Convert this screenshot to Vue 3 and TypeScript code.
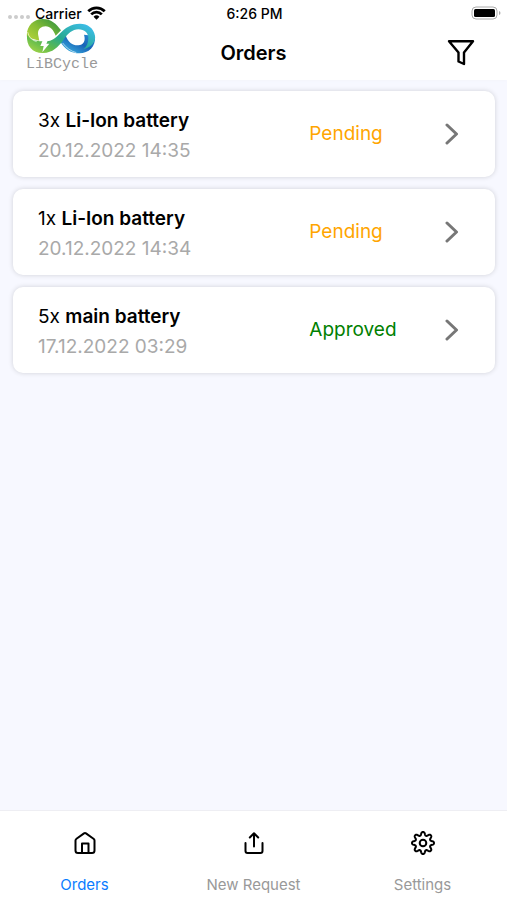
<script setup lang="ts">
import { ref } from 'vue'

type Status = 'Pending' | 'Approved'

interface Order {
  id: number
  quantity: number
  product: string
  placed: string
  status: Status
}

const orders: Order[] = [
  { id: 3, quantity: 3, product: 'Li-Ion battery', placed: '20.12.2022 14:35', status: 'Pending' },
  { id: 2, quantity: 1, product: 'Li-Ion battery', placed: '20.12.2022 14:34', status: 'Pending' },
  { id: 1, quantity: 5, product: 'main battery', placed: '17.12.2022 03:29', status: 'Approved' },
]

const tabs = [
  { id: 'orders', label: 'Orders' },
  { id: 'request', label: 'New Request' },
  { id: 'settings', label: 'Settings' },
]
const active = ref('orders')

// Outline of an eight-toothed gear, sampled around its centre.
function gearPath(centre: number, radius: number, depth: number): string {
  const points: string[] = []
  for (let i = 0; i < 160; i++) {
    const a = (i / 160) * Math.PI * 2
    const wave = Math.tanh(1.2 * Math.cos(8 * a)) / Math.tanh(1.2)
    const r = radius + depth * wave
    points.push(`${(centre + r * Math.sin(a)).toFixed(2)} ${(centre - r * Math.cos(a)).toFixed(2)}`)
  }
  return `M${points.join('L')}Z`
}
const gear = gearPath(13, 9.4, 1.6)
</script>

<template>
  <div class="screen">
    <header class="header">
      <div class="status-bar">
        <div class="carrier">
          <span class="signal"><i></i><i></i><i></i><i></i></span>
          <span>Carrier</span>
          <svg class="wifi" viewBox="0 0 18 13" aria-hidden="true">
            <path d="M1.2 4.8a11 11 0 0 1 15.6 0" />
            <path d="M4 7.8a7 7 0 0 1 10 0" />
            <path class="solid" d="M9 12.8 6.2 10a4 4 0 0 1 5.6 0Z" />
          </svg>
        </div>
        <span class="time">6:26 PM</span>
        <svg class="battery" viewBox="0 0 30 14" aria-hidden="true">
          <rect class="shell" x="1" y="1" width="25" height="12" rx="4" />
          <rect x="3" y="3" width="21" height="8" rx="1.5" />
          <path class="cap" d="M28 5v4q1.5-.6 1.5-2T28 5Z" />
        </svg>
      </div>

      <div class="title-bar">
        <h1>Orders</h1>
        <button class="filter" type="button" aria-label="Filter orders">
          <svg viewBox="0 0 28 28" aria-hidden="true">
            <path d="M2 2.2H26L17 13.5V25L11.5 22.5V13.5Z" />
          </svg>
        </button>
      </div>

      <div class="logo">
        <svg viewBox="78 54 210 108" aria-hidden="true">
          <defs>
            <linearGradient id="leaf" x1="0" y1="1" x2="1" y2="0.2">
              <stop offset="0" stop-color="#b9d63a" />
              <stop offset=".5" stop-color="#86bd35" />
              <stop offset="1" stop-color="#35953f" />
            </linearGradient>
            <linearGradient id="ribbon" x1="0" y1="1" x2="1" y2=".2">
              <stop offset="0" stop-color="#b5da45" />
              <stop offset=".3" stop-color="#5dba4d" />
              <stop offset=".55" stop-color="#27a98e" />
              <stop offset="1" stop-color="#3bbce6" />
            </linearGradient>
            <linearGradient id="water" x1="1" y1="0" x2="0" y2="1">
              <stop offset="0" stop-color="#2a8fd4" />
              <stop offset=".45" stop-color="#1863b8" />
              <stop offset="1" stop-color="#45c4ea" />
            </linearGradient>
          </defs>
          <path fill="url(#leaf)" d="M81 112C77 82 98 57 128 57C153 57 169 71 183 91L167 107C160 89 151 80 137 79C120 79 111 92 115 107L118 122Z" />
          <path fill="url(#water)" d="M285 108C288 140 266 160 238 160C213 160 195 148 181 126L197 106C204 128 219 137 235 136C250 135 258 122 252 104Z" />
          <path fill="url(#ribbon)" d="M81 104C78 138 98 160 130 159C158 158 174 142 190 120C205 99 217 89 235 88C254 88 265 99 265 114C265 130 260 140 250 148C276 140 288 124 285 107C281 84 263 71 240 71C212 71 196 84 179 101C164 117 153 124 138 123C109 125 92 120 81 104Z" />
          <path fill="#fff" d="M132 112L121 138H131L127 157L148 131H139L148 112Z" />
          <path class="seam" d="M188 129Q204 151 229 158M83 96Q88 119 110 125" />
        </svg>
        <span>LiBCycle</span>
      </div>
    </header>

    <main>
      <ul class="orders">
        <li v-for="order in orders" :key="order.id">
          <a class="card" :href="`#order-${order.id}`">
            <span class="info">
              <span class="name">{{ order.quantity }}x <strong>{{ order.product }}</strong></span>
              <span class="date">{{ order.placed }}</span>
            </span>
            <span class="status" :class="order.status.toLowerCase()">{{ order.status }}</span>
            <svg class="chevron" viewBox="0 0 14 24" aria-hidden="true">
              <path d="M2 3l9.5 9L2 21" />
            </svg>
          </a>
        </li>
      </ul>
    </main>

    <nav class="tabs">
      <a
        v-for="tab in tabs"
        :key="tab.id"
        :href="`#${tab.id}`"
        :class="{ active: active === tab.id }"
        @click="active = tab.id"
      >
        <svg viewBox="0 0 26 26" aria-hidden="true">
          <template v-if="tab.id === 'orders'">
            <path d="M3.500 10.500Q3.500 9.500 4.500 8.800L12 3.400Q13 2.700 14 3.400L21.500 8.800Q22.500 9.500 22.500 10.500V20.500Q22.500 23 20 23H6Q3.500 23 3.500 20.500Z" />
            <path d="M10 23V13.500H16.500V23" />
          </template>
          <template v-else-if="tab.id === 'request'">
            <path d="M4.5 13V21Q4.5 23 6.5 23H19.5Q21.5 23 21.5 21V13" />
            <path d="M13 16.5V3.5M8.8 7.5 13 3.3l4.2 4.2" />
          </template>
          <template v-else>
            <path :d="gear" />
            <circle cx="13" cy="13" r="3.3" />
          </template>
        </svg>
        <span>{{ tab.label }}</span>
      </a>
    </nav>
  </div>
</template>

<style>
body {
  margin: 0;
}
</style>

<style scoped>
.screen {
  display: flex;
  flex-direction: column;
  min-height: 100vh;
  background: #f7f8ff;
  color: #000;
  font-family: Inter, "Liberation Sans", sans-serif;
}

.header {
  position: relative;
  background: #fff;
  box-shadow: 0 1px 3px #f4f5fb;
}

.status-bar {
  display: grid;
  grid-template-columns: 1fr auto 1fr;
  align-items: center;
  height: 26px;
  padding: 0 6px 0 8px;
  font-size: 14px;
  font-weight: 500;
}

.carrier {
  display: flex;
  align-items: center;
  gap: 5px;
}

.signal {
  display: flex;
  gap: 2px;
  padding-top: 8px;
}

.signal i {
  width: 4px;
  height: 4px;
  border-radius: 50%;
  background: #ccc;
}

.wifi {
  width: 19px;
  height: 14px;
  fill: none;
  stroke: #000;
  stroke-width: 2.6;
}

.wifi .solid {
  fill: #000;
  stroke: none;
}

.battery {
  justify-self: end;
  width: 30px;
  height: 14px;
}

.battery .shell {
  fill: none;
  stroke: #aaa;
}

.battery .cap {
  fill: #aaa;
}

.title-bar {
  display: flex;
  align-items: center;
  justify-content: center;
  height: 54px;
}

h1 {
  margin: 0;
  font-size: 20px;
  font-weight: 600;
  line-height: 24px;
}

.filter {
  position: absolute;
  right: 32px;
  width: 28px;
  height: 28px;
  padding: 0;
  border: 0;
  background: none;
}

.filter svg {
  display: block;
  fill: none;
  stroke: #000;
  stroke-width: 2.4;
  stroke-linejoin: round;
}

.logo {
  position: absolute;
  top: 18px;
  left: 26px;
  display: flex;
  flex-direction: column;
  color: #999;
  font: 15px/22px "Liberation Mono", monospace;
}

.logo svg {
  width: 70px;
  height: 36px;
}

.seam {
  fill: none;
  stroke: #fff;
  stroke-width: 3;
  opacity: 0.6;
}

main {
  flex: 1;
}

.orders {
  display: grid;
  gap: 12px;
  margin: 0;
  padding: 11px 12px 11px 13px;
  list-style: none;
}

.card {
  display: grid;
  grid-template-columns: 2fr 1fr auto;
  align-items: center;
  padding: 0 36px 0 25px;
  border-radius: 10px;
  background: #fff;
  box-shadow: 0 0 5px rgba(0, 0, 0, 0.16);
  color: #000;
  font-size: 19px;
  line-height: 30px;
  text-decoration: none;
}

.info {
  display: grid;
  padding: 15px 0 11px;
}

.name strong {
  font-weight: 600;
}

.date {
  color: #a9a9a9;
}

.pending {
  color: #ffa500;
}

.approved {
  color: #008000;
}

.chevron {
  width: 14px;
  height: 24px;
  fill: none;
  stroke: #777;
  stroke-width: 3;
  stroke-linecap: round;
  stroke-linejoin: round;
}

.tabs {
  display: grid;
  grid-template-columns: repeat(3, 1fr);
  background: #fff;
  border-top: 1px solid #eeeef3;
}

.tabs a {
  display: flex;
  flex-direction: column;
  align-items: center;
  gap: 20px;
  padding: 19px 0 6px;
  color: #999;
  font-size: 15px;
  line-height: 18px;
  text-decoration: none;
}

.tabs a.active {
  color: #0a7cff;
}

.tabs svg {
  width: 26px;
  height: 26px;
  fill: none;
  stroke: #000;
  stroke-width: 2;
  stroke-linecap: round;
  stroke-linejoin: round;
}
</style>
